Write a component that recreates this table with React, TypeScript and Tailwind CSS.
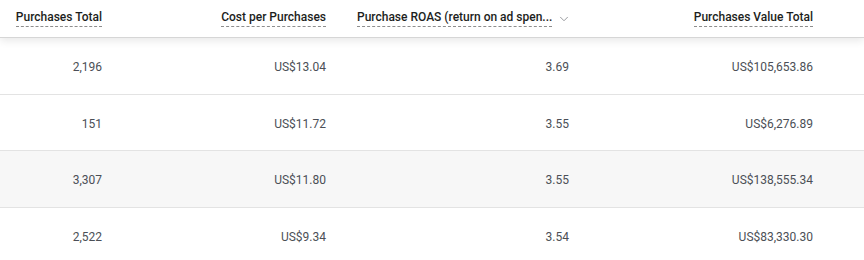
import { ChevronDown } from 'lucide-react';

interface Row {
  purchases: string;
  cost: string;
  roas: string;
  value: string;
}

const rows: Row[] = [
  { purchases: '2,196', cost: 'US$13.04', roas: '3.69', value: 'US$105,653.86' },
  { purchases: '151', cost: 'US$11.72', roas: '3.55', value: 'US$6,276.89' },
  { purchases: '3,307', cost: 'US$11.80', roas: '3.55', value: 'US$138,555.34' },
  { purchases: '2,522', cost: 'US$9.34', roas: '3.54', value: 'US$83,330.30' },
];

const rowHeights = ['h-[57px]', 'h-[56px]', 'h-[57px]', 'h-[56px]'];

const cols = 'grid grid-cols-[118px_224px_243px_244px_1fr]';

function HeadLabel({ children }: { children: React.ReactNode }) {
  return (
    <span className="border-b border-dashed border-[#8d8d8d] pb-[1px] leading-4 whitespace-nowrap">
      {children}
    </span>
  );
}

export default function App() {
  return (
    <div
      className="w-[864px] h-[260px] overflow-hidden bg-white text-[12px]"
      style={{ fontFamily: 'Roboto, "Liberation Sans", sans-serif' }}
    >
      {/* Header */}
      <div
        className={`${cols} relative z-10 h-[38px] border-b border-[#d6d6d6] bg-white font-medium text-[#1c1e21] shadow-[0_3px_8px_rgba(0,0,0,0.09)]`}
      >
        <div className="flex items-start justify-end pr-4 pt-[9px]">
          <HeadLabel>Purchases Total</HeadLabel>
        </div>
        <div className="flex items-start justify-end pr-4 pt-[9px]">
          <HeadLabel>Cost per Purchases</HeadLabel>
        </div>
        <div className="flex items-start pl-[15px] pt-[9px]">
          <HeadLabel>Purchase ROAS (return on ad spen...</HeadLabel>
          <ChevronDown className="ml-[5px] mt-[3px] h-[14px] w-[14px] text-[#8a8d91]" strokeWidth={1.5} />
        </div>
        <div className="flex items-start justify-end pr-4 pt-[9px]">
          <HeadLabel>Purchases Value Total</HeadLabel>
        </div>
        <div />
      </div>

      {/* Body */}
      {rows.map((r, i) => (
        <div
          key={i}
          className={`${cols} ${rowHeights[i]} items-center border-b border-[#e3e3e3] pt-[2px] text-[#4b4f56] ${
            i === 2 ? 'bg-[#f7f7f7]' : 'bg-white'
          }`}
        >
          <div className="pr-4 text-right">{r.purchases}</div>
          <div className="pr-4 text-right">{r.cost}</div>
          <div className="pr-4 text-right">{r.roas}</div>
          <div className="pr-4 text-right">{r.value}</div>
          <div />
        </div>
      ))}
    </div>
  );
}
